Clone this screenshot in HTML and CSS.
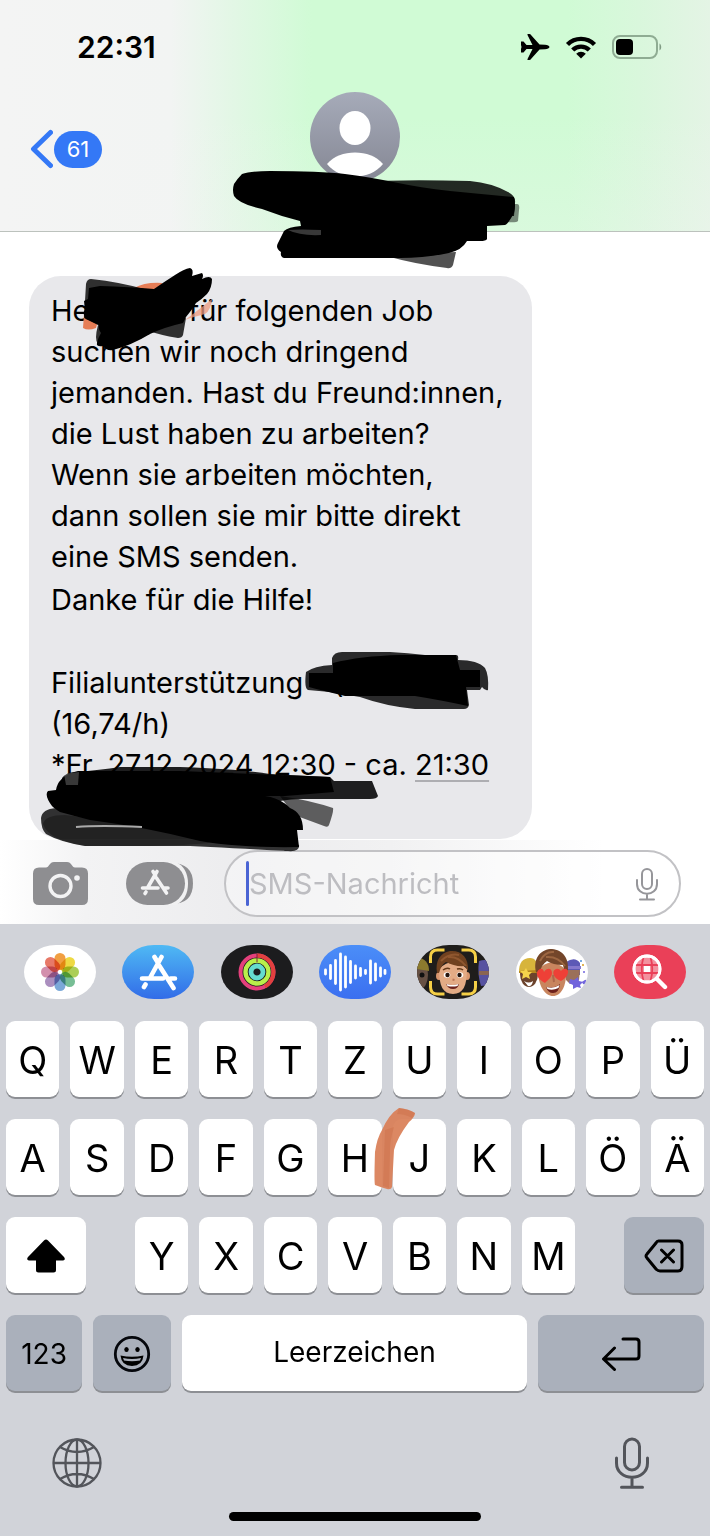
FILE: index.html
```html
<!DOCTYPE html>
<html lang="de">
<head>
<meta charset="utf-8">
<meta name="viewport" content="width=device-width, initial-scale=1">
<title>Nachrichten</title>
<link rel="stylesheet" href="styles.css">
</head>
<body>
<div class="phone">
  <header class="header">
    <div class="status">
      <time class="clock">22:31</time>
      <div class="status-icons">
        <svg width="30" height="28" viewBox="0 0 30 28" aria-hidden="true"><path d="M1 8.500h2.500l3 3.500h6L7.500 2q-.5-1 .5-1h1.500q1 0 1.500 1l8.500 9.500 5.500.3c2.500 0 4.500 1.200 4.500 2.200s-2 2.200-4.500 2.200l-5.500.3L11 26q-.5 1-1.500 1H8q-1 0-.5-1l5-10h-6l-3 3.500H1V16l.5-2-.5-2z"/></svg>
        <svg width="32" height="24" viewBox="0 0 32 24" fill="none" stroke="#000" stroke-width="4.400" aria-hidden="true"><path d="M2.500 9.500a19 19 0 0 1 27 0"/><path d="M7.700 15a11.800 11.800 0 0 1 16.600 0"/><path d="M16 23.500l-4.800-4.700a6.800 6.800 0 0 1 9.600 0z" fill="#000" stroke="none"/></svg>
        <svg width="50" height="24" viewBox="0 0 50 24" aria-hidden="true"><rect x="1" y="1" width="44" height="22" rx="7" fill="none" stroke="#8fac93" stroke-width="2"/><rect x="4" y="4" width="17" height="16" rx="4"/><path d="M47.500 8.500c2 1 2.500 5.500 0 7z" fill="#7f9a83"/></svg>
      </div>
    </div>
    <div class="nav">
      <a class="back" href="#" aria-label="Zurück, 61 ungelesen">
        <svg width="23" height="40" viewBox="0 0 23 40" fill="none" stroke="#3478f6" stroke-width="5" stroke-linecap="round" stroke-linejoin="round" aria-hidden="true"><path d="M20.500 3.500L3.500 20l17 16.500"/></svg>
        <span class="badge">61</span>
      </a>
      <div class="contact">
        <svg class="avatar" viewBox="0 0 90 90" role="img" aria-label="Kontakt">
          <defs><linearGradient id="av" x1="0" y1="0" x2="0" y2="1"><stop offset="0" stop-color="#a6abb9"/><stop offset="1" stop-color="#858794"/></linearGradient></defs>
          <circle cx="45" cy="45" r="45" fill="url(#av)"/>
          <ellipse cx="45" cy="36" rx="15.500" ry="17" fill="#fff"/>
          <path d="M17 72c7-8 17-11.500 28-11.500S66 64 73 72c-7 8.500-17 12.500-28 12.500S24 80.500 17 72z" fill="#fff"/>
        </svg>
        <svg class="ink ink-name" width="300" height="110" viewBox="225 163 300 110" aria-hidden="true">
          <path d="M505 204H517Q520 204 519 210L518 221Q517 223 505 222Z" opacity=".45"/>
          <path d="M385 255L456 252L453 265Q451 269 447 268Q415 264 390 257Z" opacity=".68"/>
          <path d="M362 182Q400 179 470 181Q492 183 508 192Q516 196 515 203L514 216H380Z" opacity=".84"/>
          <path d="M234 184Q238 178 242 174Q250 171 270 171Q320 171 345 174C380 178 410 187 450 191Q480 194 514 197Q516 206 514 213Q508 224 505 225L487 226V239Q486 241 480 241H467Q462 250 449 253Q425 258 400 258H284Q280 257 281 252Q275 248 278 243L284 231Q288 227 301 226L300 221Q280 216 262 209Q239 204 234 196Q232 190 234 184Z"/>
          <path d="M288 230Q300 229 321 230V235Q300 236 288 230Z" fill="#fff" opacity=".22"/>
        </svg>
      </div>
    </div>
  </header>

  <main class="chat">
    <article class="bubble">
      <p>He<span class="gap gap-name"></span>für folgenden Job<br>suchen wir noch dringend<br>jemanden. Hast du Freund:innen,<br>die Lust haben zu arbeiten?<br>Wenn sie arbeiten möchten,<br>dann sollen sie mir bitte direkt<br>eine SMS senden.</p>
      <p class="thanks">Danke für die Hilfe!</p>
      <p class="job">Filialunterstützung - (<br>(16,74/h)<br>*Fr. 27.12.2024 12:30 - ca. <a class="time-link" href="#">21:30</a><br>- Z</p>
      <svg class="ink ink-greeting" width="140" height="90" viewBox="77 264 140 90" aria-hidden="true">
        <path d="M84 314L83 328Q88 331 96 328L100 314ZM134 288Q145 282 162 283V296H134Z" fill="#e67d56"/>
        <path d="M185 320L193 314L212 299Q211 310 205 314L194 317Q190 318 185 320Z" fill="#ee9a7e" opacity=".75"/>
        <path d="M86 284Q87 279 91 279Q120 282 148 290L150 334L110 348L98 344Q94 340 98 325L84 318Z" opacity=".8"/>
        <path d="M150 330L186 318L183 335Q182 338 178 338Q160 335 145 330Z" opacity=".8"/>
        <path d="M84 301L88 299L89 288L100 286Q130 287 154 289Q164 282 175 275Q184 269 190 268Q194 269 192 276L202 273Q204 275 202 279Q210 275 212 279Q212 288 207 294Q201 300 196 303Q192 310 186 317L183 323Q165 327 150 334Q132 345 113 350Q106 351 103 346Q96 347 97 343Q98 338 101 333Q98 329 99 325L86 319Q82 314 85 309Z"/>
      </svg>
      <svg class="ink ink-place" width="190" height="66" viewBox="302 648 190 66" aria-hidden="true">
        <path d="M306 672Q314 666 332 665V658Q334 652 342 652H390Q408 653 425 655H456Q459 655 458 660Q478 660 485 668Q489 675 488 690Q485 691 482 687L480 690H467L469 705Q468 709 464 709H415Q385 706 360 697L330 692L308 690Q304 688 306 672Z" opacity=".82"/>
        <path d="M309 673H333V663Q360 656 400 655H456L460 670H480V687H466L468 706Q440 700 415 696H345Q320 690 309 687Z"/>
      </svg>
      <svg class="ink ink-address" width="346" height="94" viewBox="36 762 346 94" aria-hidden="true">
        <path d="M280 796Q310 800 333 808Q334 811 329 825Q328 828 324 826Q308 820 294 815Z" opacity=".6"/>
        <path d="M62 778Q66 772 76 772Q100 770 120 767H180Q240 769 270 774L330 777L334 781H372L378 796Q377 799 370 799H300Q270 800 250 810L62 800Z" opacity=".87"/>
        <path d="M41 818Q42 809 56 808L270 835L299 845Q300 852 288 851Q230 848 190 846H85Q60 842 46 834Q41 829 41 818Z" opacity=".79"/>
        <path d="M78 771H180L330 777L334 792Q310 794 285 796H265Q280 798 290 808Q303 813 303 830H297L299 847Q240 848 200 841Q145 827 90 820L60 812Q54 808 52 806Q44 795 48 791L56 790Q58 776 78 771Z"/>
        <path d="M64 774L79 772L78 785L66 785Z" fill="#fff" opacity=".22"/>
        <path d="M43 824Q45 815 65 815Q100 819 150 827Q190 834 210 843Q180 846 150 846H85Q48 840 43 824Z" opacity=".3"/>
        <path d="M76 827Q100 825 142 827" fill="none" stroke="#aaa" stroke-width="2"/>
      </svg>
    </article>
  </main>

  <form class="composer">
    <button class="tool" type="button" aria-label="Kamera">
      <svg width="55" height="43" viewBox="0 0 55 43" aria-hidden="true"><path d="M6 5.500h7c3 0 3.500-5.500 8-5.500h13c4.500 0 5 5.500 8 5.500h7q6 0 6 6V37q0 6-6 6H6q-6 0-6-6V11.500q0-6 6-6z" fill="#8e8e91"/><circle cx="27.500" cy="24" r="10.500" fill="none" stroke="#f3f3f4" stroke-width="3.400"/><circle cx="44" cy="16" r="2.800" fill="#f3f3f4"/></svg>
    </button>
    <button class="tool" type="button" aria-label="Apps">
      <svg width="67" height="43" viewBox="0 0 67 43" aria-hidden="true"><path d="M45 1Q67 1 67 21.500T45 42Z" fill="#8e8e91"/><path d="M50 0Q62 6 62 21.500T50 43H30V0Z" fill="#f1f1f2"/><rect width="59" height="43" rx="21.500" fill="#8e8e91"/><g fill="none" stroke="#f3f3f4" stroke-width="3.600" stroke-linecap="round"><path d="M27 9.500l2.500 4M31 9.500L22 25M29.500 14.500l11 16.500M16.500 26H32M38.500 26h3.500M20 30l-1 1.500"/></g></svg>
    </button>
    <label class="field">
      <span class="caret"></span>
      <input class="message" type="text" placeholder="SMS-Nachricht" aria-label="SMS-Nachricht">
      <svg width="24" height="34" viewBox="0 0 24 34" fill="none" stroke="#96969a" stroke-width="2" stroke-linecap="round" aria-hidden="true"><rect x="7" y="2" width="10" height="20" rx="5"/><path d="M2 13v4c0 13 20 13 20 0v-4M12 27v5M5 32.500h14"/></svg>
    </label>
  </form>

  <section class="keyboard" aria-label="Tastatur">
    <div class="apps">
      <button class="app white" type="button" aria-label="Fotos"><svg width="40" height="40" viewBox="-20 -20 40 40" aria-hidden="true"><g class="petals"><rect x="-5.500" y="-19" width="11" height="17" rx="5.500" fill="#f0952d"/><rect x="-5.500" y="-19" width="11" height="17" rx="5.500" fill="#ecd52f" transform="rotate(45)"/><rect x="-5.500" y="-19" width="11" height="17" rx="5.500" fill="#a3c944" transform="rotate(90)"/><rect x="-5.500" y="-19" width="11" height="17" rx="5.500" fill="#68b789" transform="rotate(135)"/><rect x="-5.500" y="-19" width="11" height="17" rx="5.500" fill="#6c9fd4" transform="rotate(180)"/><rect x="-5.500" y="-19" width="11" height="17" rx="5.500" fill="#a283b8" transform="rotate(225)"/><rect x="-5.500" y="-19" width="11" height="17" rx="5.500" fill="#cf83a4" transform="rotate(270)"/><rect x="-5.500" y="-19" width="11" height="17" rx="5.500" fill="#e56a57" transform="rotate(315)"/></g></svg></button>
      <button class="app store" type="button" aria-label="App Store"><svg width="40" height="38" viewBox="0 0 40 38" fill="none" stroke="#fff" stroke-width="4.600" stroke-linecap="round" aria-hidden="true"><path d="M16.500 4l3 5M23.500 4L12.500 24M21.500 13l14 22M4 25.500h21M32.500 25.500H37M7.500 31.500L6 34"/></svg></button>
      <button class="app dark" type="button" aria-label="Fitness"><svg width="38" height="38" viewBox="-19 -19 38 38" fill="none" aria-hidden="true"><circle r="16.500" stroke="#e4407c" stroke-width="4"/><path d="M0-16.500A16.500 16.500 0 0 1 8 14.400" stroke="#e2403f" stroke-width="4"/><circle r="11.500" stroke="#b9ef4b" stroke-width="4.400"/><circle r="6" stroke="#65dccf" stroke-width="4.800"/><path d="M0-18v8" stroke="#7c2638" stroke-width="1"/></svg></button>
      <button class="app audio" type="button" aria-label="Audio"><svg width="64" height="40" viewBox="0 0 64 40" stroke="#fff" stroke-width="2.800" stroke-linecap="round" aria-hidden="true"><path d="M2.500 18v4M7.500 13.500v13M12.500 8.500v23M17.500 2v36M22.500 5v30M27.500 9.500v21M32.500 14v12M37.500 16.500v7M42.500 18.500v3M47.500 9v22M52.500 12v16M57.500 16v8M62 18.500v3"/></svg></button>
      <button class="app black" type="button" aria-label="Memoji"><svg width="72" height="54" viewBox="0 0 72 54" aria-hidden="true">
        <ellipse cx="3" cy="30" rx="8" ry="14" fill="#665044"/><path d="M0 12q12 2 12 14l-12-2z" fill="#8b7a2e"/><circle cx="5" cy="30" r="2.500" fill="#111"/><path d="M62 16q6-2 10 0v24l-8 1q-4-12-2-25z" fill="#5752a0"/><path d="M62 26h10v4H62z" fill="#8a6551"/>
        <path d="M13.500 18v-6q0-7 7-7h7M44.500 5h7q7 0 7 7v6M13.500 36v6q0 7 7 7h7M44.500 49h7q7 0 7-7v-6" fill="none" stroke="#f5cf46" stroke-width="3"/>
        <ellipse cx="22" cy="31" rx="3" ry="4" fill="#d8966e"/><ellipse cx="50" cy="31" rx="3" ry="4" fill="#d8966e"/><path d="M22 24q14-14 28 0c0 17-4 25-14 25S22 41 22 24z" fill="#e3ab85"/><path d="M20 28C18 16 23 8 33 6c11-1 19 6 18 20l-3-5q-10 1-19-4-5 3-7 11z" fill="#70411f"/><path d="M24 16q8-8 18-6M31 12q10-1 18 9" fill="none" stroke="#8f572f" stroke-width="2"/><ellipse cx="30" cy="30" rx="3.300" ry="2.800" fill="#fff"/><ellipse cx="43" cy="30" rx="3.300" ry="2.800" fill="#fff"/><circle cx="30.500" cy="30" r="2.200" fill="#26150d"/><circle cx="42.500" cy="30" r="2.200" fill="#26150d"/><path d="M26 25q4-3 7-1M40 24q4-1 6 1" fill="none" stroke="#633818" stroke-width="1.500"/><path d="M35.500 34.500l2 .5" stroke="#bb7658" stroke-width="2"/><path d="M29 39q7 2 13 0-1 5-6 5t-7-5z" fill="#6d241e"/><path d="M29.500 39q6 2 12 0l-1 2q-5 1-10 0z" fill="#fff"/></svg></button>
      <button class="app white" type="button" aria-label="Sticker"><svg width="72" height="54" viewBox="0 0 72 54" aria-hidden="true">
        <ellipse cx="13" cy="29" rx="9" ry="13" fill="#6c432c"/><path d="M3 27q0-14 11-14 8 0 8 13z" fill="#d7b43b"/><path d="M3 26l19-1v3H3z" fill="#b5861e"/><path d="M10 23l2 4 4 0-3 3 1 4-4-2-4 2 1-5-3-3h4z" fill="#f5d34b"/><path d="M8 36q5 3 9 0-1 6-5 5z" fill="#fff"/>
        <path d="M50 17q9-6 14 1v12H50z" fill="#5c59b6"/><path d="M49 21h16v3H49z" fill="#8578cc"/><path d="M50 25h14l-1 10-9 4-4-4z" fill="#9b705a"/><path d="M54 34l4 1 4-3 1 4 4 1-3 3 1 3-4-1-4 2v-4l-4-2zM66 37q5-4 4-1 0 4-3 3" fill="#7164dc"/><circle cx="67" cy="20" r="1" fill="#d69e22"/><circle cx="65" cy="16" r="1" fill="#4d91d6"/><circle cx="68" cy="27" r="1" fill="#7164dc"/>
        <path d="M22 25q13-15 28 0c1 16-5 26-13 26S22 41 22 25z" fill="#c8855e"/><path d="M20 27C17 14 24 5 34 4c11 0 19 7 18 21l-3 3-2-8q-10 0-16-4-6 4-8 13z" fill="#73462a"/><path d="M24 16q5-10 14-9M30 12q12-1 19 9" fill="none" stroke="#9c6641" stroke-width="2"/><path d="M29 38c-8-4-11-11-5-14q3-1 4 3c3-5 8-4 8 1 0 4-4 7-7 10zM45 36c-8-3-10-10-5-12q3-1 5 2c3-4 8-2 7 2-1 4-4 6-7 8z" fill="#ee4037"/><path d="M37 30l1 7" stroke="#ad684b" stroke-width="2"/><path d="M30 42q8 2 14-3-1 9-7 9-5 0-7-6z" fill="#6e211b"/><path d="M30.500 42q7 2 13-2l-1 3q-6 3-11 1z" fill="#fff"/></svg></button>
      <button class="app red" type="button" aria-label="Bilder"><svg width="36" height="36" viewBox="0 0 36 36" fill="none" stroke="#fff" stroke-linecap="round" aria-hidden="true"><circle cx="15" cy="15" r="13" fill="#f3919e" stroke-width="2.800"/><path d="M12 11h6v7h-6z" fill="#fff" stroke="none"/><path d="M3 11h24M3 19h24M11.500 3Q8 15 11.500 27M18.500 3Q22 15 18.500 27" stroke="#ea4058" stroke-width="1.800"/><circle cx="15" cy="15" r="13" stroke-width="2.800"/><path d="M25 25l8 8" stroke-width="4.400"/></svg></button>
    </div>

    <div class="keys">
      <div class="row letters">
        <button class="key">Q</button><button class="key">W</button><button class="key">E</button><button class="key">R</button><button class="key">T</button><button class="key">Z</button><button class="key">U</button><button class="key">I</button><button class="key">O</button><button class="key">P</button><button class="key">Ü</button>
      </div>
      <div class="row letters">
        <button class="key">A</button><button class="key">S</button><button class="key">D</button><button class="key">F</button><button class="key">G</button><button class="key">H</button><button class="key">J<svg class="ink ink-key" width="44" height="84" viewBox="372 1107 44 84" aria-hidden="true"><path d="M398 1108Q408 1109 414 1113Q414 1117 408 1122Q396 1138 393 1150L391 1187Q390 1190 386 1189Q379 1187 374 1185Q373 1183 374 1152Q376 1138 381 1130Q388 1114 398 1108Z" fill="#d97f57" opacity=".93"/><path d="M398 1108Q408 1109 414 1113L411 1118Q404 1114 396 1114ZM384 1130L393 1127Q389 1140 389 1150L388 1188L382 1186Z" fill="#c96b42" opacity=".35"/></svg></button><button class="key">K</button><button class="key">L</button><button class="key">Ö</button><button class="key">Ä</button>
      </div>
      <div class="row letters">
        <button class="key shift" aria-label="Umschalt"><svg width="40" height="34" viewBox="0 0 40 34" aria-hidden="true"><path d="M18 1.500q2-2 4 0L38 18q2 3-1 3.500h-7V31q0 2.500-2.500 2.500h-15Q10 33.500 10 31v-9.500H3q-3-.5-1-3.500z"/></svg></button>
        <button class="key">Y</button><button class="key">X</button><button class="key">C</button><button class="key">V</button><button class="key">B</button><button class="key">N</button><button class="key">M</button>
        <button class="key grey delete" aria-label="Löschen"><svg width="40" height="34" viewBox="0 0 40 34" fill="none" stroke="#000" stroke-width="3" stroke-linecap="round" stroke-linejoin="round" aria-hidden="true"><path d="M14.500 2H34q4 0 4 4v21q0 5-4 5H16q-2 0-4-2L3 19q-2-2 0-4L12 4q1-2 2.500-2zM17.500 11l12 12M29.500 11l-12 12"/></svg></button>
      </div>
      <div class="row bottom">
        <button class="key grey numbers">123</button>
        <button class="key grey emoji" aria-label="Emoji"><svg width="38" height="38" viewBox="0 0 38 38" aria-hidden="true"><circle cx="19" cy="19" r="16.700" fill="none" stroke="#05070c" stroke-width="2.800"/><ellipse cx="13.500" cy="14.500" rx="2.200" ry="2.600"/><ellipse cx="24.500" cy="14.500" rx="2.200" ry="2.600"/><path d="M7.500 20.500q11.500 2.500 23 0-1 10.500-11.500 10.500T7.500 20.500z"/><path d="M10 23q9 2 18 0l-1 2.500q-8 1.500-16 0z" fill="#aab0bb"/></svg></button>
        <button class="key space">Leerzeichen</button>
        <button class="key grey return" aria-label="Eingabe"><svg width="40" height="34" viewBox="0 0 40 34" fill="none" stroke="#000" stroke-width="3" stroke-linecap="round" stroke-linejoin="round" aria-hidden="true"><path d="M22 2h13q3 0 3 3v14q0 3-3 3H3M13.500 11L2.500 22l11 10.500"/></svg></button>
      </div>
    </div>

    <div class="system">
      <button class="plain" aria-label="Tastatur wechseln"><svg width="50" height="50" viewBox="0 0 50 50" fill="none" stroke="#53555b" stroke-width="2.300" aria-hidden="true"><circle cx="25" cy="25" r="23.500"/><ellipse cx="25" cy="25" rx="11.500" ry="23.500"/><path d="M25 1.500v47M1.500 25h47M8 9q17 10 34 0M8 41q17-10 34 0"/></svg></button>
      <button class="plain" aria-label="Diktieren"><svg width="36" height="52" viewBox="0 0 36 52" fill="none" stroke="#53555b" stroke-width="3" stroke-linecap="round" aria-hidden="true"><rect x="10.500" y="2" width="15" height="31" rx="7.500"/><path d="M2.500 21v5c0 19 31 19 31 0v-5M18 41v9M7.500 50.200h21"/></svg></button>
    </div>
    <div class="home"></div>
  </section>
</div>
</body>
</html>
```

FILE: styles.css
```css
* { box-sizing: border-box; }

body {
  margin: 0;
  font-family: Inter, "Liberation Sans", sans-serif;
  color: #000;
  background: #fff;
}

button {
  margin: 0;
  padding: 0;
  border: 0;
  background: none;
  font: inherit;
  color: inherit;
}

svg { display: block; flex: none; }
p { margin: 0; }

.phone {
  display: flex;
  flex-direction: column;
  min-height: 100vh;
}

/* Header */
.header {
  position: relative;
  z-index: 3;
  border-bottom: 1px solid #bcc2bd;
  background:
    linear-gradient(to bottom, rgba(244, 244, 244, 0) 50%, rgba(244, 244, 244, .25)),
    linear-gradient(to right, #f4f4f4 0, #f2f4f3 24%, #e2f7e5 33%, #d0fbd5 44%, #d0fbd5 80%, #d9f7dc 90%, #e4f4e5 100%);
}

.status {
  display: flex;
  align-items: center;
  justify-content: space-between;
  height: 92px;
  padding: 2px 48px 0 77px;
}

.clock { font-size: 30px; font-weight: 600; line-height: 36px; }
.status-icons { display: flex; align-items: center; gap: 15px; }

.nav {
  display: grid;
  grid-template-columns: 1fr 90px 1fr;
  height: 139px;
  padding: 0 30px;
}

.back {
  display: flex;
  align-items: center;
  align-self: start;
  gap: 1px;
  margin-top: 37px;
  text-decoration: none;
}

.badge {
  width: 48px;
  border-radius: 19px;
  background: #3478f6;
  color: #fff;
  font-size: 22px;
  line-height: 37px;
  text-align: center;
}

.contact { position: relative; }
.avatar { width: 90px; height: 90px; }

.ink { position: absolute; pointer-events: none; }
.ink-name { left: -85px; top: 71px; }

/* Conversation */
.chat {
  position: relative;
  z-index: 2;
  padding: 44px 29px 1px;
}

.bubble {
  position: relative;
  width: 77%;
  min-width: 503px;
  padding: 14px 22px 13px;
  border-radius: 32px;
  background: #e8e8eb;
  font-size: 29px;
  line-height: 41px;
  white-space: nowrap;
}

.gap { display: inline-block; }
.gap-name { width: 99px; }
.thanks { margin-top: 2px; }
.job { margin-top: 42px; }

.time-link {
  color: inherit;
  text-decoration: underline;
  text-decoration-color: #aeaeb2;
  text-decoration-thickness: 2px;
  text-underline-offset: 5px;
}

.ink-greeting { left: 48px; top: -12px; }
.ink-place { left: 273px; top: 372px; }
.ink-address { left: 7px; top: 486px; }

/* Message field */
.composer {
  display: flex;
  align-items: center;
  padding: 10px 29px 7px 33px;
  background: linear-gradient(to right, #fff 0, #f3f3f4 12%, #ececee 35%, #f1f1f2 55%, #fff 85%);
}

.tool { margin-right: 38px; }
.tool + .tool { margin-right: 31px; }

.field {
  display: flex;
  flex: 1;
  align-items: center;
  min-width: 0;
  height: 67px;
  padding: 0 20px;
  border: 2px solid #c2c2c5;
  border-radius: 34px;
  background: rgba(255, 255, 255, .4);
}

.caret { flex: none; width: 3px; height: 45px; border-radius: 2px; background: #4a64d4; }

.message {
  flex: 1;
  min-width: 0;
  padding: 0;
  border: 0;
  outline: 0;
  background: none;
  font: 29px/36px Inter, "Liberation Sans", sans-serif;
}

.message::placeholder { color: #bdbdc1; opacity: 1; }

/* Keyboard */
.keyboard {
  display: flex;
  flex: 1;
  flex-direction: column;
  padding: 21px 6px 15px;
  background: #d1d3d9;
}

.apps { display: flex; justify-content: space-between; padding: 0 18px; }

.app {
  display: flex;
  align-items: center;
  justify-content: center;
  overflow: hidden;
  width: 72px;
  height: 54px;
  border-radius: 32px / 27px;
}

.white { background: #fff; }
.petals rect { mix-blend-mode: multiply; opacity: .9; }
.store { background: linear-gradient(#4fb9f4, #326ce8); }
.dark { background: #1c1c1e; }
.audio { background: linear-gradient(#4b8ef8, #3b6ff0); }
.black { background: #1f1d1b; }
.red { background: #ea4058; }

.keys { display: flex; flex-direction: column; gap: 22px; margin-top: 22px; }
.letters { display: grid; grid-template-columns: repeat(11, minmax(0, 1fr)); gap: 11px; }
.bottom { display: flex; gap: 11px; }

.key {
  position: relative;
  display: flex;
  align-items: center;
  justify-content: center;
  height: 76px;
  padding-top: 2px;
  border-radius: 9px;
  background: #fff;
  box-shadow: 0 2px 0 #8d8f94;
  font-size: 38px;
}

.grey { background: #aab0bb; }
.shift { grid-column: 1 / 3; width: 68%; }
.delete { grid-column: 10 / 12; justify-self: end; width: 68%; }
.numbers { flex: 76 1 0; font-size: 28px; }
.emoji { flex: 78 1 0; }
.space { flex: 344 1 0; padding: 0 0 2px; font-size: 28px; }
.return { flex: 166 1 0; }
.ink-key { left: -20px; top: -12px; z-index: 1; }

.system {
  display: flex;
  align-items: center;
  justify-content: space-between;
  height: 72px;
  margin-top: 36px;
  padding: 0 54px 0 46px;
}

.home {
  align-self: center;
  width: 36%;
  height: 9px;
  margin-top: 13px;
  border-radius: 5px;
  background: #000;
}
```
